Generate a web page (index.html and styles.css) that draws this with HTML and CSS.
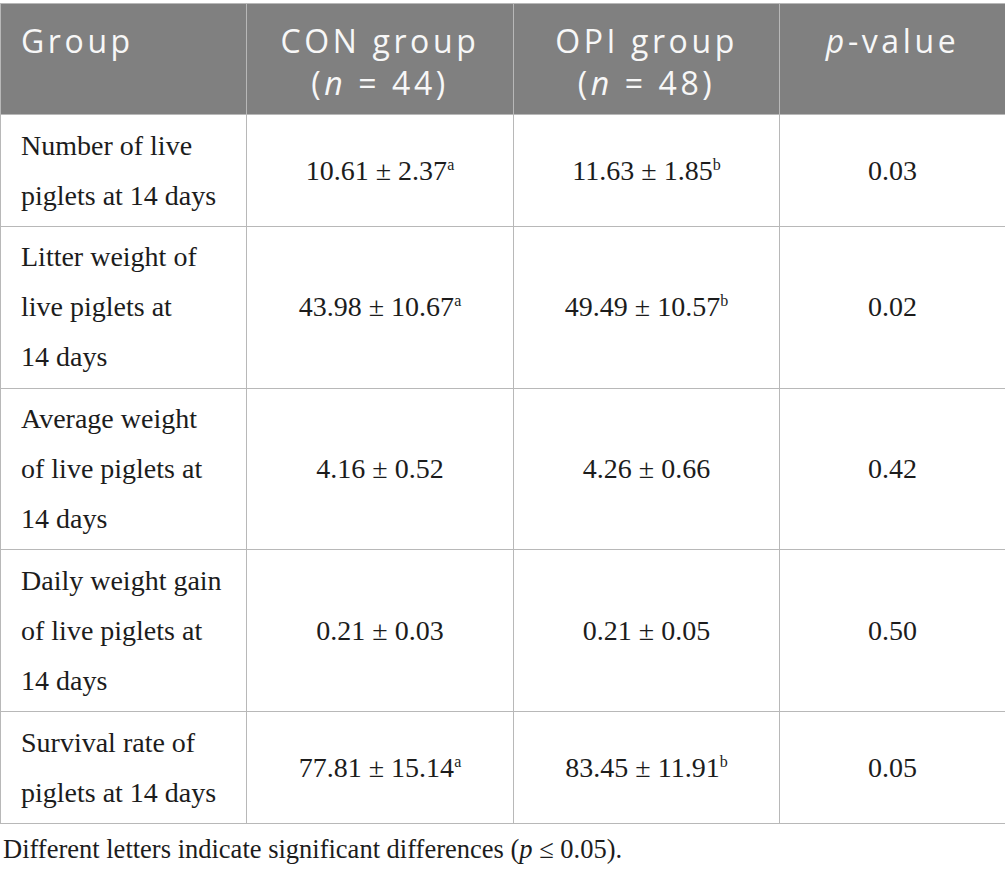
FILE: index.html
```html
<!DOCTYPE html>
<html lang="en">
<head>
<meta charset="utf-8">
<title>Table</title>
<link rel="stylesheet" href="styles.css">
</head>
<body>
<table class="data-table">
  <colgroup>
    <col class="c1"><col class="c2"><col class="c3"><col class="c4">
  </colgroup>
  <thead>
    <tr>
      <th class="left">Group</th>
      <th>CON group<br>(<i>n</i> = 44)</th>
      <th>OPI group<br>(<i>n</i> = 48)</th>
      <th><i>p</i>-value</th>
    </tr>
  </thead>
  <tbody>
    <tr>
      <td class="label">Number of live piglets at 14&nbsp;days</td>
      <td>10.61 ± 2.37<sup>a</sup></td>
      <td>11.63 ± 1.85<sup>b</sup></td>
      <td>0.03</td>
    </tr>
    <tr>
      <td class="label">Litter weight of live piglets at 14&nbsp;days</td>
      <td>43.98 ± 10.67<sup>a</sup></td>
      <td>49.49 ± 10.57<sup>b</sup></td>
      <td>0.02</td>
    </tr>
    <tr>
      <td class="label">Average weight of live piglets at 14&nbsp;days</td>
      <td>4.16 ± 0.52</td>
      <td>4.26 ± 0.66</td>
      <td>0.42</td>
    </tr>
    <tr>
      <td class="label">Daily weight gain of live piglets at 14&nbsp;days</td>
      <td>0.21 ± 0.03</td>
      <td>0.21 ± 0.05</td>
      <td>0.50</td>
    </tr>
    <tr>
      <td class="label">Survival rate of piglets at 14&nbsp;days</td>
      <td>77.81 ± 15.14<sup>a</sup></td>
      <td>83.45 ± 11.91<sup>b</sup></td>
      <td>0.05</td>
    </tr>
  </tbody>
</table>
<p class="footnote">Different letters indicate significant differences (<i>p</i> ≤ 0.05).</p>
</body>
</html>
```
FILE: styles.css
```css
html, body {
  margin: 0;
  padding: 0;
  background: #ffffff;
}
body {
  padding-top: 3px;
  font-family: "Liberation Serif", "Times New Roman", serif;
  color: #1c1c1c;
}
.data-table {
  width: 1005px;
  border-collapse: collapse;
  table-layout: fixed;
}
.c1 { width: 246px; }
.c2 { width: 267px; }
.c3 { width: 266px; }
.c4 { width: 226px; }
.data-table th,
.data-table td {
  border: 1px solid #b8b8b8;
}
.data-table th {
  background: #808080;
  color: #f7f7f7;
  font-family: "Open Sans", "DejaVu Sans", sans-serif;
  font-weight: 400;
  font-size: 32px;
  letter-spacing: 3.6px;
  line-height: 42px;
  text-align: center;
  vertical-align: top;
  padding: 16px 20px 10px 20px;
}
.data-table th.left {
  text-align: left;
}
.data-table td {
  font-size: 28px;
  line-height: 50px;
  text-align: center;
  vertical-align: middle;
  padding: 5.5px 20px 5.25px 20px;
}
.data-table td.label {
  text-align: left;
}
.data-table sup {
  font-size: 16px;
  line-height: 0;
  vertical-align: 10px;
}
.footnote {
  margin: 0;
  padding-left: 3px;
  font-size: 26.5px;
  line-height: 50px;
}
```
